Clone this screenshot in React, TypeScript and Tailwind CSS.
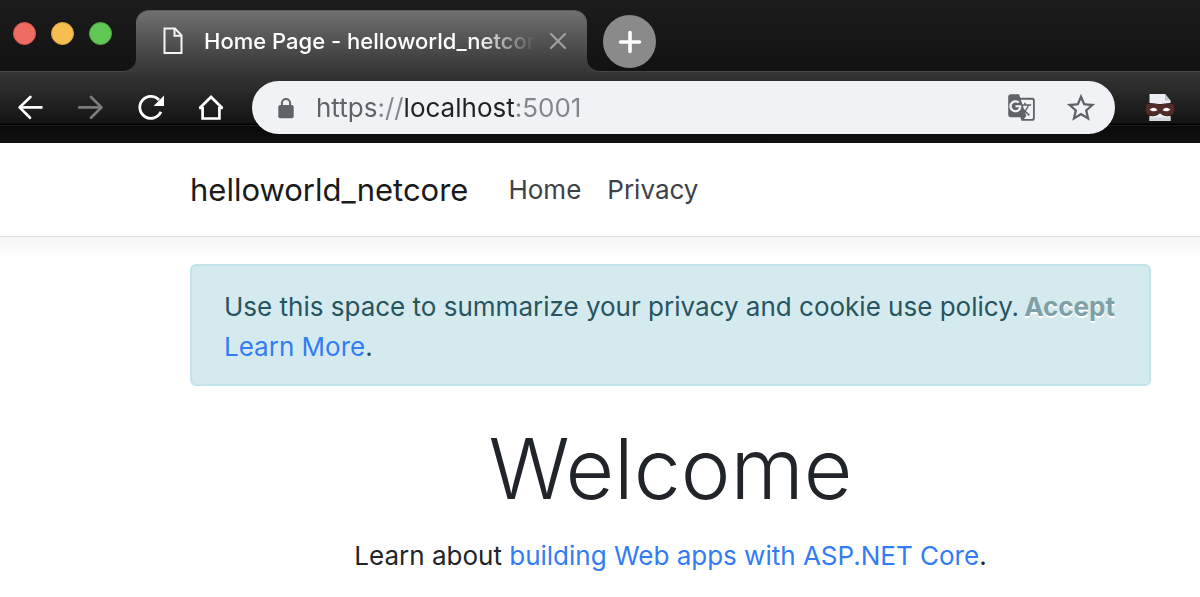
import { useState } from "react";
import { MdGTranslate, MdStarBorder } from "react-icons/md";

function TrafficLights() {
  return (
    <div className="flex gap-[15px]">
      <button aria-label="Close window" className="size-[23px] rounded-full border border-[#d9574c] bg-[#ed6b60]" />
      <button aria-label="Minimize window" className="size-[23px] rounded-full border border-[#dba53c] bg-[#f6be50]" />
      <button aria-label="Zoom window" className="size-[23px] rounded-full border border-[#4cab3f] bg-[#62c655]" />
    </div>
  );
}

function PageIcon() {
  return (
    <svg viewBox="0 0 20 28" className="h-7 w-5 shrink-0" fill="none" stroke="#f4f4f4" strokeWidth="2" aria-hidden="true">
      <path d="M1.500 1.500h10.500l6.500 6.800v17.700H1.500z" />
      <path d="M11.500 1.500v7.300h7" />
    </svg>
  );
}

function BackIcon() {
  return (
    <svg viewBox="0 0 30 30" className="size-[30px]" fill="none" stroke="currentColor" strokeWidth="2.7" strokeLinecap="round" strokeLinejoin="round" aria-hidden="true">
      <path d="M14.400 4 3.600 14.400l10.400 10.400" />
      <path d="M4 14.400h22.500" strokeLinecap="butt" />
    </svg>
  );
}

function ForwardIcon() {
  return (
    <svg viewBox="0 0 30 30" className="size-[30px]" fill="none" stroke="currentColor" strokeWidth="2.7" strokeLinecap="round" strokeLinejoin="round" aria-hidden="true">
      <path d="M15 4 25.500 14.400 15 24.800" />
      <path d="M25.200 14.400H2.200" strokeLinecap="butt" />
    </svg>
  );
}

function ReloadIcon() {
  return (
    <svg viewBox="0 0 30 30" className="size-[30px]" aria-hidden="true">
      <path d="M23 7A11 11 0 1 0 24.900 18.700" fill="none" stroke="currentColor" strokeWidth="2.800" />
      <path d="M28 2.500v10.400H17.600z" fill="currentColor" />
    </svg>
  );
}

function HomeIcon() {
  return (
    <svg viewBox="0 0 30 30" className="size-[30px]" fill="none" stroke="currentColor" strokeWidth="2.7" aria-hidden="true">
      <path d="M3.600 15.200 15 4l11.400 11.200" />
      <path d="M3.200 15H6.600V25.500h16.800V15h3.400" />
    </svg>
  );
}

function LockIcon() {
  return (
    <svg viewBox="0 0 26 26" className="size-[26px] shrink-0" aria-hidden="true">
      <rect x="5.300" y="10" width="15.400" height="13.300" rx="1.800" fill="currentColor" />
      <path d="M8.900 10.500V8a4.100 4.100 0 0 1 8.200 0v2.500" fill="none" stroke="currentColor" strokeWidth="2" />
    </svg>
  );
}

function MaskedPageIcon() {
  return (
    <svg viewBox="0 0 32 30" className="h-[30px] w-8" aria-hidden="true">
      <path d="M5.500 1h15.500l5.500 6.500v20.500H5.500z" fill="#eceef3" />
      <path d="M21 1v6.500h5.500z" fill="#bfc2c9" />
      <path d="M5.500 24.500h21V28h-21z" fill="#d3d5db" />
      <path d="M2 10.500h3q5.500.2 11 1.200 5.500-1 11-1.200h3q1.200 5-.4 10.500-3 2-7 1.800-4-.4-6.600-3-2.600 2.600-6.600 3-4 .2-7-1.800-1.600-5.500-.4-10.500z" fill="#512b29" stroke="#351a19" strokeWidth="1" />
      <path d="M5.500 16.500q4.500-4 8 .6-4.200 2.800-8-.6z" fill="#fff" />
      <path d="M26.500 16.500q-4.500-4-8 .6 4.200 2.800 8-.6z" fill="#fff" />
    </svg>
  );
}

function TabStrip() {
  return (
    <div className="flex h-[72px] bg-[#3a3a3a]">
      <div className="w-[136px] shrink-0 rounded-br-[13px] border-b border-[#454545] bg-linear-to-b from-[#1c1c1c] to-[#121212] pt-[22px] pl-[13px]">
        <TrafficLights />
      </div>
      <div className="w-[451px] shrink-0 bg-[linear-gradient(to_bottom,#1c1c1c,#181818_36px,transparent_36px)] pt-2.5">
        <div className="flex h-full items-center rounded-t-[13px] border-t border-[#5a5a5a] bg-linear-to-b from-[#707070] to-[#363636] pr-[15px] pb-0.5 pl-[27px]">
          <PageIcon />
          <span className="ml-[21px] w-[332px] overflow-hidden text-[22px] font-medium whitespace-nowrap text-white [mask-image:linear-gradient(to_right,black_82%,transparent)]">
            Home Page - helloworld_netcore
          </span>
          <button aria-label="Close tab" className="ml-auto text-[#a0a0a0]">
            <svg viewBox="0 0 28 28" className="size-7" stroke="currentColor" strokeWidth="2.2" strokeLinecap="round" aria-hidden="true">
              <path d="m7 7 14 14M21 7 7 21" />
            </svg>
          </button>
        </div>
      </div>
      <div className="grow rounded-bl-[13px] border-b border-[#454545] bg-linear-to-b from-[#1c1c1c] to-[#121212] pt-[15px] pl-4">
        <button aria-label="New tab" className="flex size-[53px] items-center justify-center rounded-full bg-[#8a8a8a] text-white">
          <svg viewBox="0 0 24 24" className="size-6" stroke="currentColor" strokeWidth="3.6" strokeLinecap="round" aria-hidden="true">
            <path d="M12 2.500v19M2.500 12h19" />
          </svg>
        </button>
      </div>
    </div>
  );
}

function Toolbar() {
  const [url, setUrl] = useState("https://localhost:5001");
  return (
    <div className="relative flex h-[71px] items-center bg-[linear-gradient(to_bottom,#363636_0,#141414_51px,#000_52px,#000_53px,#1c1c1c_53px,#1c1c1c_54px,#0a0a0a_54px,#101010_71px)] pl-4">
      <div className="flex shrink-0 gap-[30px] text-white">
        <button aria-label="Back"><BackIcon /></button>
        <button aria-label="Forward" className="text-[#7d7d7d]"><ForwardIcon /></button>
        <button aria-label="Reload"><ReloadIcon /></button>
        <button aria-label="Home"><HomeIcon /></button>
      </div>
      <div className="ml-[26px] flex h-[53px] min-w-0 grow items-center rounded-full bg-[#f1f2f5] pr-[17px] pl-[21px] text-[#5f6368]">
        <LockIcon />
        <input
          aria-label="Address"
          value={url}
          onChange={(event) => setUrl(event.target.value)}
          className="ml-[17px] min-w-0 grow bg-[linear-gradient(to_right,#5f6368_62px,#80868b_62px,#80868b_87px,#202124_87px,#202124_200px,#80868b_200px)] bg-clip-text text-[26px] text-transparent outline-none"
        />
        <button aria-label="Translate this page" className="mr-7"><MdGTranslate className="size-[29px]" /></button>
        <button aria-label="Bookmark this page"><MdStarBorder className="size-[34px]" /></button>
      </div>
      <button aria-label="Extension" className="mr-6 ml-[29px] shrink-0"><MaskedPageIcon /></button>
    </div>
  );
}

function SiteHeader() {
  return (
    <header className="border-b border-[#dee2e6] bg-white pr-[49px] pl-[190px] shadow-[0_-5px_20px_12px_rgba(0,0,0,0.06)]">
      <nav className="flex h-[93px] items-center">
        <a href="#" className="text-[31px] text-[#1a1a1a]">helloworld_netcore</a>
        <a href="#" className="ml-10 text-[26px] text-[#3d4146]">Home</a>
        <a href="#" className="ml-[26px] text-[26px] text-[#3d4146]">Privacy</a>
      </nav>
    </header>
  );
}

export default function App() {
  return (
    <div className="min-h-screen overflow-hidden bg-white font-['Inter','Liberation_Sans',sans-serif] text-[26px] leading-10 text-[#212529]">
      <TabStrip />
      <Toolbar />
      <SiteHeader />
      <main className="pt-[27px] pr-[49px] pl-[190px]">
        <div role="alert" className="flex items-start justify-between rounded-md border-2 border-[#c2e3e9] bg-[#d5eaee] pt-[21px] pr-[34px] pb-[17px] pl-8 text-[#285460]">
          <p>
            Use this space to summarize your privacy and cookie use policy.
            <br />
            <a href="#" className="text-[#327cf6]">Learn More</a>.
          </p>
          <button className="font-bold text-[#809fa6] [text-shadow:0_2px_0_#fff]">Accept</button>
        </div>
        <div className="pt-[27px] text-center">
          <h1 className="text-[84px] leading-[112px] font-light">Welcome</h1>
          <p className="mt-[11px]">
            Learn about <a href="#" className="text-[#327cf6]">building Web apps with ASP.NET Core</a>.
          </p>
        </div>
      </main>
    </div>
  );
}
